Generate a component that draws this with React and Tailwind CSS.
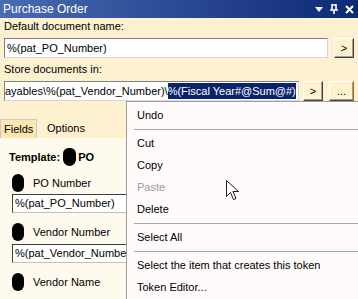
import React from 'react'

const FONT = { fontFamily: '"Liberation Sans", Arial, sans-serif' }

function Blob({ className = '' }) {
  return <div className={`h-[18px] w-[12px] shrink-0 rounded-[6px] bg-black blur-[0.6px] ${className}`} />
}

function RaisedButton({ children, className = '' }) {
  return (
    <div
      className={`flex h-[20px] shrink-0 items-center justify-center border border-t-white border-l-white border-r-[#404040] border-b-[#404040] bg-[#fdf1d0] text-[11px] text-black shadow-[inset_-1px_-1px_0_#a0a0a0] ${className}`}
    >
      {children}
    </div>
  )
}

function MenuItem({ children, disabled }) {
  return (
    <div className={`flex h-[22px] items-center pl-[10px] text-[11px] ${disabled ? 'text-[#9a9a9a]' : 'text-black'}`}>
      {children}
    </div>
  )
}

function Sep() {
  return (
    <div className="flex h-[6px] items-center pl-[7px]">
      <div className="h-px w-full bg-[#a8a8a8]" />
    </div>
  )
}

export default function App() {
  return (
    <div className="relative h-[299px] w-[358px] overflow-hidden bg-[#fdf1d0] select-none" style={FONT}>
      {/* title bar */}
      <div className="flex h-[18px] items-center justify-between bg-gradient-to-r from-[#4a6ab2] to-[#0c2a74] pl-[3px] pr-[4px] text-white">
        <span className="text-[12px] leading-none">Purchase Order</span>
        <div className="flex items-center gap-[7px]">
          <svg width="8" height="5" viewBox="0 0 8 5">
            <path d="M0 0h8L4 5z" fill="white" />
          </svg>
          <svg width="8" height="10" viewBox="0 0 8 10">
            <path d="M2 0v6M6 0v6M2 1h4M0 6h8M4 6v4" stroke="white" strokeWidth="1.6" fill="none" />
          </svg>
          <svg width="9" height="9" viewBox="0 0 9 9">
            <path d="M1 1l7 7M8 1L1 8" stroke="white" strokeWidth="2" />
          </svg>
        </div>
      </div>

      {/* top fields */}
      <div className="flex flex-col px-[4px]">
        <div className="mt-px h-[14px] text-[11px] leading-[14px] text-black">Default document name:</div>
        <div className="mt-[5px] flex items-center">
          <div className="flex h-[20px] w-[324px] items-center border border-t-[#808080] border-l-[#808080] border-r-[#d8d8d8] border-b-[#d8d8d8] bg-white px-[2px] text-[11px]">
            %(pat_PO_Number)
          </div>
          <RaisedButton className="ml-[6px] w-[20px]">&gt;</RaisedButton>
        </div>
        <div className="mt-[4px] h-[14px] text-[11px] leading-[14px] text-black">Store documents in:</div>
        <div className="mt-[5px] flex items-center">
          <div className="flex h-[20px] w-[295px] shrink-0 items-center overflow-hidden whitespace-nowrap border border-t-[#808080] border-l-[#808080] border-r-[#d8d8d8] border-b-[#d8d8d8] bg-white text-[11px]">
            <span className="shrink-0">ayables\%(pat_Vendor_Number)\</span>
            <span className="shrink-0 bg-[#0a246a] text-white">%(Fiscal Year#@Sum@#)</span>
          </div>
          <RaisedButton className="ml-[4px] w-[20px]">&gt;</RaisedButton>
          <RaisedButton className="ml-[6px] w-[25px] border-r-[#b06a00]">...</RaisedButton>
        </div>
      </div>

      {/* tabs */}
      <div className="mt-[18px] flex h-[19px] items-stretch text-[11px]">
        <div className="flex w-[37px] items-center border-x border-t border-[#c6cad6] bg-[#fde6b0] pl-[3px]">Fields</div>
        <div className="flex items-center pl-[10px]">Options</div>
      </div>

      {/* fields panel */}
      <div className="flex h-[170px] flex-col bg-[#fffaee] pl-[9px] text-[11px]">
        <div className="mt-[10px] flex h-[18px] items-center">
          <span className="font-bold">Template:</span>
          <Blob className="ml-[3px] w-[13px] rounded-b-[7px]" />
          <span className="ml-[2px] font-bold">PO</span>
        </div>
        <div className="mt-[8px] flex h-[18px] items-center pl-[3px]">
          <Blob />
          <span className="ml-[9px]">PO Number</span>
        </div>
        <div className="ml-[3px] mt-[2px] flex h-[19px] w-[200px] items-center border border-t-[#404040] border-l-[#404040] border-r-[#c0c0c0] border-b-[#c0c0c0] bg-white pl-[2px] text-[11px]">
          %(pat_PO_Number)
        </div>
        <div className="mt-[10px] flex h-[18px] items-center pl-[3px]">
          <Blob />
          <span className="ml-[9px]">Vendor Number</span>
        </div>
        <div className="ml-[3px] mt-[3px] flex h-[19px] w-[200px] items-center border border-t-[#404040] border-l-[#404040] border-r-[#c0c0c0] border-b-[#c0c0c0] bg-white pl-[2px] text-[11px]">
          %(pat_Vendor_Number)
        </div>
        <div className="mt-[10px] flex h-[18px] items-center pl-[3px]">
          <Blob />
          <span className="ml-[9px]">Vendor Name</span>
        </div>
      </div>

      {/* context menu */}
      <div className="absolute left-[126px] top-[101px] w-[240px] border border-[#a0a0a0] bg-[#fffbfb] pt-[2px] pb-[3px]">
        <MenuItem>Undo</MenuItem>
        <Sep />
        <MenuItem>Cut</MenuItem>
        <MenuItem>Copy</MenuItem>
        <MenuItem disabled>Paste</MenuItem>
        <MenuItem>Delete</MenuItem>
        <Sep />
        <MenuItem>Select All</MenuItem>
        <Sep />
        <MenuItem>Select the item that creates this token</MenuItem>
        <MenuItem>Token Editor...</MenuItem>
      </div>

      {/* mouse cursor */}
      <svg className="absolute left-[226px] top-[180px]" width="14" height="21" viewBox="0 0 14 21">
        <path d="M0.5 0.5v16l4-4 3 7 2.5-1-3-7h5.5z" fill="white" stroke="#1a1a2a" strokeWidth="1" />
      </svg>
    </div>
  )
}
